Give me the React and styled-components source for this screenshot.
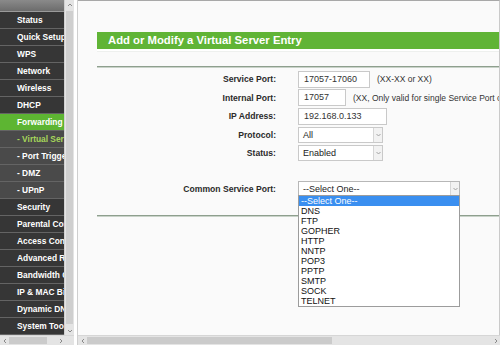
import React from 'react';
import styled, { createGlobalStyle } from 'styled-components';

const GlobalStyle = createGlobalStyle`
  html, body { margin: 0; padding: 0; background: #fff; overflow: hidden; }
  body { font-family: 'Liberation Sans', Arial, sans-serif; }
`;

const MENU = [
  { label: 'Status' },
  { label: 'Quick Setup' },
  { label: 'WPS' },
  { label: 'Network' },
  { label: 'Wireless' },
  { label: 'DHCP' },
  { label: 'Forwarding', active: true },
  { label: '- Virtual Server', sub: true, current: true },
  { label: '- Port Triggering', sub: true },
  { label: '- DMZ', sub: true },
  { label: '- UPnP', sub: true },
  { label: 'Security' },
  { label: 'Parental Control' },
  { label: 'Access Control' },
  { label: 'Advanced Routing' },
  { label: 'Bandwidth Control' },
  { label: 'IP & MAC Binding' },
  { label: 'Dynamic DNS' },
  { label: 'System Tools' },
];

const SERVICES = ['--Select One--', 'DNS', 'FTP', 'GOPHER', 'HTTP', 'NNTP', 'POP3', 'PPTP', 'SMTP', 'SOCK', 'TELNET'];

const ARROWS = {
  up: 'M1 4 L3 2 L5 4',
  down: 'M1 2 L3 4 L5 2',
  left: 'M4 1 L2 3 L4 5',
  right: 'M2 1 L4 3 L2 5',
};

const Page = styled.div`
  display: flex;
  width: 500px;
  height: 345px;
  overflow: hidden;
  background: #fff;
`;

const MenuFrame = styled.div`
  width: 74px;
  display: flex;
  flex-direction: column;
`;

const MenuBody = styled.div`
  flex: 1;
  display: flex;
  min-height: 0;
`;

const Menu = styled.div`
  width: 65px;
  display: flex;
  flex-direction: column;
  background: #3a3a3a;
  overflow: hidden;
`;

const MenuTop = styled.div`
  height: 14px;
  background: linear-gradient(#8a8a8a, #6c6c6c);
  border-bottom: 1px solid #9a9a9a;
`;

const MenuRow = styled.div`
  height: 16px;
  line-height: 16px;
  border-bottom: 1px solid #646464;
  padding-left: 17px;
  white-space: nowrap;
  font-size: 8.4px;
  font-weight: bold;
  color: ${({ current }) => (current ? '#a6d65a' : '#fff')};
  background: ${({ active, sub }) => (active ? '#5db532' : sub ? '#4a4a4a' : '#363636')};
`;

const VScroll = styled.div`
  width: 9px;
  display: flex;
  flex-direction: column;
  align-items: center;
  background: #e4e4e4;
  border-left: 1px solid #d0d0d0;
`;

const VThumb = styled.div`
  flex: 1;
  width: 7px;
  margin: 2px 0;
  background: #cfcfcf;
`;

const ArrowCell = styled.span`
  display: flex;
  align-items: center;
  justify-content: center;
  width: 9px;
  height: 9px;
  flex-shrink: 0;
`;

const HScroll = styled.div`
  height: 9px;
  display: flex;
  align-items: center;
  background: #e4e4e4;
  border-top: 1px solid #d6d6d6;
`;

const HThumb = styled.div`
  height: 7px;
  width: ${({ w }) => w}px;
  background: #cbcbcb;
`;

const HTrack = styled.div`
  flex: 1;
`;

const FrameGap = styled.div`
  width: 3px;
  background: #fff;
  border-right: 1px solid #cfcfcf;
`;

const ContentFrame = styled.div`
  flex: 1;
  display: flex;
  flex-direction: column;
  min-width: 0;
`;

const Content = styled.div`
  flex: 1;
  position: relative;
  background: #fafafa;
  border-top: 1px solid #a8a8a8;
  border-right: 1px solid #cacaca;
  padding: 31px 0 0 19px;
  overflow: hidden;
  white-space: nowrap;
`;

const Title = styled.div`
  height: 17px;
  line-height: 17px;
  background: #60b436;
  color: #fff;
  font-size: 11.3px;
  font-weight: bold;
  padding-left: 11px;
  box-shadow: 0 2px 0 #fff, 0 3px 0 #eef0ee;
`;

const Divider = styled.div`
  height: 1px;
  background: #8e9f8e;
  border-bottom: 1px solid #c9d3c9;
  margin-top: ${({ top }) => top}px;
`;

const Form = styled.div`
  display: grid;
  grid-template-columns: 179px auto;
  grid-auto-rows: 18.5px;
  column-gap: 22px;
  align-items: center;
  margin-top: ${({ top }) => top}px;
`;

const Label = styled.div`
  text-align: right;
  font-size: 8.6px;
  font-weight: bold;
  color: #2a2a2a;
`;

const Field = styled.div`
  display: flex;
  align-items: center;
  gap: 7px;
`;

const Input = styled.div`
  box-sizing: border-box;
  width: ${({ w }) => w}px;
  height: 17px;
  line-height: 15px;
  padding-left: 5px;
  border: 1px solid #c9c9c9;
  background: #fff;
  font-size: 9px;
  color: #333;
`;

const Hint = styled.span`
  font-size: 8.5px;
  color: #333;
`;

const Select = styled.div`
  position: relative;
  box-sizing: border-box;
  width: ${({ w }) => w}px;
  height: ${({ h }) => h}px;
  display: flex;
  align-items: center;
  padding-left: 4px;
  border: 1px solid ${({ open }) => (open ? '#b7b7b7' : '#c9c9c9')};
  background: #fff;
  font-size: 9px;
  color: #222;
`;

const SelectText = styled.span`
  flex: 1;
`;

const ArrowBox = styled.span`
  box-sizing: border-box;
  width: 9px;
  height: 100%;
  display: flex;
  align-items: center;
  justify-content: center;
  border-left: 1px solid #d6d6d6;
  background: #f2f2f2;
`;

const DropList = styled.div`
  position: absolute;
  top: 100%;
  left: -1px;
  width: 162px;
  box-sizing: border-box;
  border: 1px solid #9c9c9c;
  background: #fff;
  z-index: 2;
`;

const DropItem = styled.div`
  height: 10px;
  line-height: 10px;
  padding-left: 2px;
  font-size: 9px;
  color: ${({ selected }) => (selected ? '#fff' : '#111')};
  background: ${({ selected }) => (selected ? '#3a8ff0' : '#fff')};
`;

const Arrow = ({ dir, color = '#8a8a8a' }) => (
  <ArrowCell>
    <svg width="6" height="6" viewBox="0 0 6 6">
      <path d={ARROWS[dir]} fill="none" stroke={color} strokeWidth="1" />
    </svg>
  </ArrowCell>
);

const Dropdown = ({ w, h, value, open }) => (
  <Select w={w} h={h} open={open}>
    <SelectText>{value}</SelectText>
    <ArrowBox>
      <svg width="5" height="4" viewBox="0 0 5 4">
        <path d="M0.5 1 L2.5 3 L4.5 1" fill="none" stroke="#9a9a9a" strokeWidth="0.9" />
      </svg>
    </ArrowBox>
    {open && (
      <DropList>
        {SERVICES.map((s, i) => (
          <DropItem key={s} selected={i === 0}>{s}</DropItem>
        ))}
      </DropList>
    )}
  </Select>
);

const App = () => (
  <>
    <GlobalStyle />
    <Page>
      <MenuFrame>
        <MenuBody>
          <Menu>
            <MenuTop />
            {MENU.map((m) => (
              <MenuRow key={m.label} active={m.active} sub={m.sub} current={m.current}>
                {m.label}
              </MenuRow>
            ))}
          </Menu>
          <VScroll>
            <Arrow dir="up" />
            <VThumb />
            <Arrow dir="down" />
          </VScroll>
        </MenuBody>
        <HScroll>
          <Arrow dir="left" />
          <HThumb w={38} />
          <HTrack />
          <Arrow dir="right" />
          <ArrowCell />
        </HScroll>
      </MenuFrame>
      <FrameGap />
      <ContentFrame>
        <Content>
          <Title>Add or Modify a Virtual Server Entry</Title>
          <Divider top={17} />
          <Form top={2}>
            <Label>Service Port:</Label>
            <Field>
              <Input w={72}>17057-17060</Input>
              <Hint>(XX-XX or XX)</Hint>
            </Field>
            <Label>Internal Port:</Label>
            <Field>
              <Input w={48}>17057</Input>
              <Hint>(XX, Only valid for single Service Port or leave a blank)</Hint>
            </Field>
            <Label>IP Address:</Label>
            <Field>
              <Input w={89}>192.168.0.133</Input>
            </Field>
            <Label>Protocol:</Label>
            <Field>
              <Dropdown w={85} h={16} value="All" />
            </Field>
            <Label>Status:</Label>
            <Field>
              <Dropdown w={85} h={16} value="Enabled" />
            </Field>
          </Form>
          <Form top={17}>
            <Label>Common Service Port:</Label>
            <Field>
              <Dropdown w={162} h={15} value="--Select One--" open />
            </Field>
          </Form>
          <Divider top={17} />
        </Content>
        <HScroll>
          <Arrow dir="left" />
          <HThumb w={245} />
          <HTrack />
          <Arrow dir="right" />
        </HScroll>
      </ContentFrame>
    </Page>
  </>
);

export default App;
